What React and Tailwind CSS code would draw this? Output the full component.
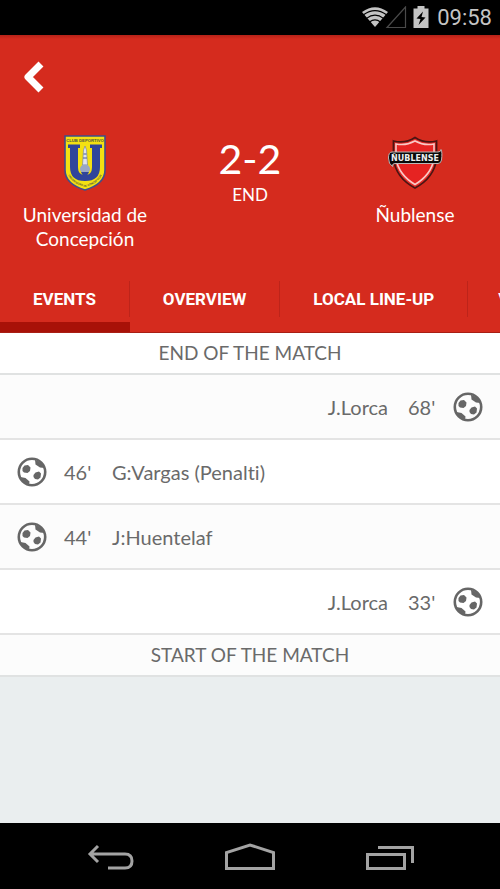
import React from "react";
import clsx from "clsx";

const tabs = ["EVENTS", "OVERVIEW", "LOCAL LINE-UP", "VISITOR LINE-UP"];

const events = [
  { minute: "68'", player: "J.Lorca", side: "away" },
  { minute: "46'", player: "G:Vargas (Penalti)", side: "home" },
  { minute: "44'", player: "J:Huentelaf", side: "home" },
  { minute: "33'", player: "J.Lorca", side: "away" },
];

const StatusBar = () => (
  <div className="flex h-[35px] shrink-0 items-center justify-end bg-black pr-2 text-[#c4c4c4]">
    <svg width="28" height="22" viewBox="0 0 28 22" aria-hidden="true">
      <path d="M1 5 Q14 -4.5 27 5 L14 20 Z" fill="#c4c4c4" />
      <g fill="none" stroke="#000" strokeWidth="1.2">
        <path d="M2.5 7.7 Q14 -0.5 25.5 7.7" />
        <path d="M5.5 11.4 Q14 4.8 22.5 11.4" />
        <path d="M8.5 15 Q14 10.6 19.5 15" />
      </g>
    </svg>
    <svg className="-ml-1" width="22" height="24" viewBox="0 0 22 24" aria-hidden="true">
      <path d="M20.5 1 V21.5 H2 Z" fill="none" stroke="#4a4a4a" strokeWidth="1.2" />
    </svg>
    <svg className="ml-1.5" width="16" height="24" viewBox="0 0 16 24" aria-hidden="true">
      <path d="M4.5 0 H11.5 V2.5 H15.5 V22 H0.5 V2.5 H4.5 Z" fill="#c4c4c4" />
      <path d="M10 5.5 L3.5 12.5 L7.5 13 L5.5 19 L12.5 11.5 L8.5 11 Z" fill="#000" />
    </svg>
    <span className="ml-2 font-[Roboto,sans-serif] text-[22px] leading-6">09:58</span>
  </div>
);

const ConcepcionCrest = () => (
  <svg width="42" height="56" viewBox="0 0 42 56" role="img" aria-label="Universidad de Concepción">
    <path d="M1 1 H41 V35 Q41 49 21 55 Q1 49 1 35 Z" fill="#f3e112" stroke="#3d4f8c" strokeWidth="1.6" />
    <text x="21" y="7" textAnchor="middle" fontFamily="Liberation Sans, sans-serif" fontSize="4.2" fontWeight="bold" fill="#4c5340">CLUB DEPORTIVO</text>
    <path d="M4 9.5 H16 V13 H14 V32 Q14 40 21 40 Q28 40 28 32 V13 H26 V9.5 H38 V13 H36 V32 Q36 46 21 46 Q6 46 6 32 V13 H4 Z" fill="#2f459b" />
    <path d="M14.5 13 H27.5 V32 Q27.5 40 21 40 Q14.5 40 14.5 32 Z" fill="#f3e112" />
    <path d="M21 11 L22.5 15 L23.5 30 H18.5 L19.5 15 Z" fill="#dfe4ee" stroke="#6b7aa5" strokeWidth="0.6" />
    <path d="M19.5 19 H22.5 M19 23 H23" stroke="#4a5c98" strokeWidth="1" />
    <ellipse cx="21" cy="34" rx="5" ry="4.5" fill="#9aa8c4" />
    <path d="M17 37 H25 L23.5 40 H18.5 Z" fill="#2f459b" />
    <path id="motto" d="M3 37 Q6 48 21 52 Q36 48 39 37" fill="none" />
    <text fontFamily="Liberation Sans, sans-serif" fontSize="2.7" fontWeight="bold" fill="#4c5340">
      <textPath href="#motto" startOffset="50%" textAnchor="middle">UNIVERSIDAD DE CONCEPCION</textPath>
    </text>
  </svg>
);

const NublenseCrest = () => (
  <svg width="56" height="56" viewBox="0 0 56 56" role="img" aria-label="Ñublense">
    <path d="M6.5 6 Q18 9 28 2.5 Q38 9 49.5 6 V24 Q47 43 28 53 Q9 43 6.5 24 Z" fill="#e42a27" stroke="#4a1513" strokeWidth="1.8" />
    <path d="M9 9 Q19 11 28 6 Q37 11 47 9 V24 Q44 40 28 49.5 Q12 40 9 24 Z" fill="#e62322" stroke="#fac9c6" strokeWidth="1.6" />
    <path d="M5 17 H51 Q54 17 54 14.5 Q55.5 17 54.5 25 Q54 28.5 51 28.5 H8 Q5 28.5 5.5 31.5 Q1.5 29 1.5 23 Q1.5 17 5 17 Z" fill="#090909" stroke="#b9b9b9" strokeWidth="1" />
    <text x="28" y="26" textAnchor="middle" fontFamily="DejaVu Sans, sans-serif" fontSize="8" fontWeight="bold" fill="#eee">ÑUBLENSE</text>
  </svg>
);

const BallIcon = () => (
  <svg className="shrink-0" width="30" height="30" viewBox="0 0 30 30" role="img" aria-label="Goal">
    <circle cx="15" cy="15" r="13.2" fill="none" stroke="#666" strokeWidth="2.6" />
    <g fill="#666">
      <path d="M5.5 11 L7.5 8.5 L11 8 L13.5 10.5 L13 14 L10.5 16 L7 15.5 L5.5 14 Z" />
      <path d="M16.5 18 L18.5 15.5 L22 14.5 L24 16.5 L23.5 20.5 L21 22.5 L18 22 L16.5 20 Z" />
      <path d="M18 2.5 L26 7 L27.5 11 L23 10.5 L18.5 7.5 Z" />
      <path d="M3.5 20 L8.5 21 L12.5 24.5 L12 28 L6.5 26 Z" />
    </g>
  </svg>
);

const Team = ({ name, children }) => (
  <div className="flex flex-col items-center px-4 text-center text-[19px] leading-6">
    {children}
    <h2 className="mt-3">{name}</h2>
  </div>
);

const MatchHeader = () => (
  <header className="flex shrink-0 flex-col border-b border-[#a81e14] bg-[#d52b1e] text-white">
    <div className="h-1 bg-linear-to-b from-[#b52218] to-[#d52b1e]" />
    <button type="button" aria-label="Back" className="mt-5 ml-5 flex h-9 w-7 items-center justify-center">
      <svg width="22" height="32" viewBox="0 0 22 32" aria-hidden="true">
        <path d="M15.5 5.5 L5 16 L15.5 26.5" fill="none" stroke="#fff" strokeWidth="7" strokeLinejoin="round" strokeLinecap="square" />
      </svg>
    </button>
    <div className="mt-10 grid grid-cols-[17fr_16fr_17fr]">
      <Team name="Universidad de Concepción"><ConcepcionCrest /></Team>
      <div className="flex flex-col items-center">
        <p className="text-[41px] leading-12">2-2</p>
        <p className="text-[17px] leading-6">END</p>
      </div>
      <Team name="Ñublense"><NublenseCrest /></Team>
    </div>
    <nav className="mt-7 flex overflow-hidden font-[Roboto,sans-serif] text-[17px] font-bold">
      {tabs.map((tab, index) => (
        <button
          key={tab}
          type="button"
          className={clsx(
            "group shrink-0 border-b-10 pt-0.5 whitespace-nowrap",
            index === 0 ? "border-[#a81108]" : "border-transparent"
          )}
        >
          <span className="mb-[5px] block border-r border-[#bd241a] px-[33px] leading-9 group-last:px-[30px]">{tab}</span>
        </button>
      ))}
    </nav>
  </header>
);

const PeriodRow = ({ children, className }) => (
  <li className={clsx("flex h-[42px] items-center justify-center border-b-2 border-[#e0e2e2] text-[19px]", className)}>
    {children}
  </li>
);

const EventRow = ({ event, shaded }) => (
  <li
    className={clsx(
      "flex h-[65px] items-center border-b-2 border-[#e4e4e4] px-[17px] text-xl",
      shaded ? "bg-[#fcfcfc]" : "bg-white",
      event.side === "away" && "flex-row-reverse"
    )}
  >
    <BallIcon />
    <span className={clsx("w-7 shrink-0 whitespace-nowrap", event.side === "away" ? "mr-[17px]" : "ml-[17px]")}>
      {event.minute}
    </span>
    <span className={event.side === "away" ? "mr-5" : "ml-5"}>{event.player}</span>
  </li>
);

const SystemNav = () => (
  <nav className="flex h-[66px] shrink-0 items-center justify-center gap-[88px] bg-black pt-1">
    <button type="button" aria-label="System back">
      <svg width="52" height="30" viewBox="0 0 52 30" fill="none" stroke="#a3a3a3" strokeWidth="3">
        <path d="M14 3 L6 11 L14 19 M6 11 H41 Q48 11 48 18 Q48 25 41 25 H24" />
      </svg>
    </button>
    <button type="button" aria-label="Home">
      <svg width="52" height="30" viewBox="0 0 52 30" fill="none" stroke="#a3a3a3" strokeWidth="3">
        <path d="M2.5 25.5 V9.5 L26 2 L49.5 9.5 V25.5 Z" />
      </svg>
    </button>
    <button type="button" aria-label="Recent apps">
      <svg width="52" height="30" viewBox="0 0 52 30" fill="none" stroke="#a3a3a3" strokeWidth="3">
        <path d="M3.5 11.5 H40.5 V25.5 H3.5 Z M14 4.5 H48.5 V20" />
      </svg>
    </button>
  </nav>
);

const App = () => (
  <div className="flex min-h-screen flex-col bg-[#eaeeef] font-[Lato,sans-serif] text-[#6a6a6a] [font-variant-ligatures:none]">
    <StatusBar />
    <MatchHeader />
    <main className="flex-1">
      <ul>
        <PeriodRow className="bg-white">END OF THE MATCH</PeriodRow>
        {events.map((event, index) => (
          <EventRow key={event.minute} event={event} shaded={index % 2 === 0} />
        ))}
        <PeriodRow className="bg-[#fcfcfc]">START OF THE MATCH</PeriodRow>
      </ul>
    </main>
    <SystemNav />
  </div>
);

export default App;
